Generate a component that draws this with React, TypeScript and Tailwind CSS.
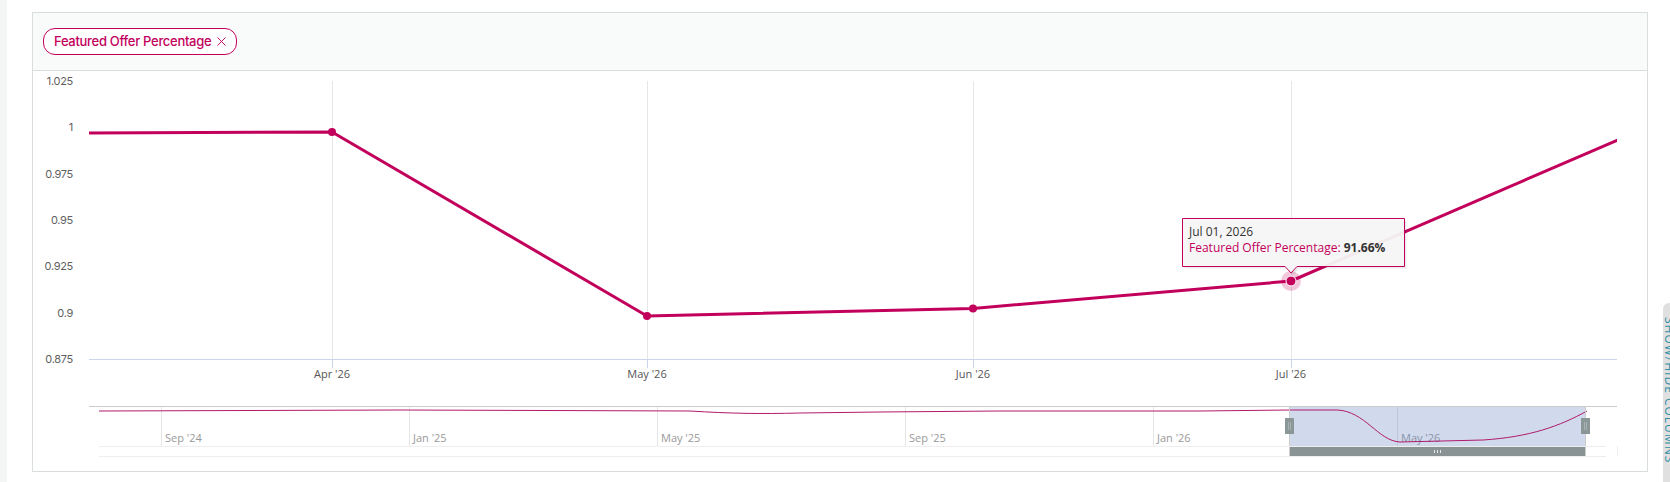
import React from "react";
import { X } from "lucide-react";

const CRIMSON = "#c2005c";

const yTicks: [string, number][] = [
  ["1.025", 81],
  ["1", 127],
  ["0.975", 174],
  ["0.95", 220],
  ["0.925", 266],
  ["0.9", 313],
  ["0.875", 359],
];

const xTicks: [string, number][] = [
  ["Apr '26", 332],
  ["May '26", 647],
  ["Jun '26", 973],
  ["Jul '26", 1291],
];

const navTicks: [string, number][] = [
  ["Sep '24", 161],
  ["Jan '25", 409],
  ["May '25", 657],
  ["Sep '25", 905],
  ["Jan '26", 1153],
  ["May '26", 1397],
];

const points: [number, number][] = [
  [332, 132],
  [647, 316],
  [973, 308.5],
];

const openSans = { fontFamily: "'Open Sans', 'DejaVu Sans', sans-serif" };

function Chart() {
  return (
    <svg width={1614} height={400} viewBox="33 71 1614 400" className="block">
      <defs>
        <clipPath id="plot">
          <rect x={89} y={70} width={1528} height={300} />
        </clipPath>
      </defs>
      {/* vertical grid */}
      {xTicks.map(([, x]) => (
        <line key={x} x1={x + 0.5} x2={x + 0.5} y1={81} y2={359} stroke="#e6e6e6" strokeWidth={1} />
      ))}
      {/* x axis line */}
      <line x1={89} x2={1617} y1={359.5} y2={359.5} stroke="#ccd6eb" strokeWidth={1} />
      {xTicks.map(([, x]) => (
        <line key={"t" + x} x1={x + 0.5} x2={x + 0.5} y1={359} y2={368} stroke="#ccd6eb" strokeWidth={1} />
      ))}
      {/* y labels */}
      <g
        fill="#5f5f5f"
        fontSize={11}
        textAnchor="end"
        style={{ fontFamily: "Inter, 'Liberation Sans', sans-serif", letterSpacing: "-0.3px" }}
      >
        {yTicks.map(([l, y]) => (
          <text key={l} x={73} y={y + 4}>
            {l}
          </text>
        ))}
      </g>
      {/* x labels */}
      <g fill="#555555" fontSize={11} textAnchor="middle" style={openSans}>
        {xTicks.map(([l, x]) => (
          <text key={l} x={x} y={378}>
            {l}
          </text>
        ))}
      </g>
      {/* series */}
      <g clipPath="url(#plot)">
        <path
          d="M89,133 L332,132 L647,316 L973,308.5 L1291,281 L1620,139"
          fill="none"
          stroke={CRIMSON}
          strokeWidth={3}
          strokeLinejoin="round"
        />
        {points.map(([x, y]) => (
          <circle key={x} cx={x} cy={y} r={4} fill={CRIMSON} />
        ))}
        <circle cx={1291} cy={281} r={10} fill={CRIMSON} opacity={0.22} />
        <circle cx={1291} cy={281} r={5} fill={CRIMSON} stroke="#ffffff" strokeWidth={1} />
      </g>

      {/* navigator */}
      {navTicks.map(([, x]) => (
        <line key={"n" + x} x1={x + 0.5} x2={x + 0.5} y1={406} y2={446} stroke="#e6e6e6" strokeWidth={1} />
      ))}
      <g fill="#999999" fontSize={11} style={openSans}>
        {navTicks.map(([l, x]) => (
          <text key={"nl" + l} x={x + 4} y={442}>
            {l}
          </text>
        ))}
      </g>
      <rect x={1289} y={406.5} width={296} height={40} fill="rgba(102,133,194,0.3)" />
      <path
        d="M99,411 L400,410 L690,411 C730,413.5 760,414 800,413 L880,412 L1000,411 L1200,411 L1290,410 L1337,410 C1365,411 1378,441 1400,442 L1483,440 C1530,437 1560,426 1587,411"
        fill="none"
        stroke="#b01a6c"
        strokeWidth={1}
      />
      {/* outline */}
      <line x1={89} x2={1617} y1={406.5} y2={406.5} stroke="#cccccc" strokeWidth={1} />
      <line x1={1289.5} x2={1289.5} y1={406} y2={456} stroke="#cccccc" strokeWidth={1} />
      <line x1={1585.5} x2={1585.5} y1={406} y2={456} stroke="#cccccc" strokeWidth={1} />
      {/* scrollbar */}
      <line x1={99} x2={1606} y1={446.5} y2={446.5} stroke="#eeeeee" strokeWidth={1} />
      <line x1={99} x2={1606} y1={456.5} y2={456.5} stroke="#eeeeee" strokeWidth={1} />
      <line x1={1617.5} x2={1617.5} y1={446} y2={456} stroke="#eeeeee" strokeWidth={1} />
      <rect x={1290} y={447} width={295} height={9} fill="#899393" />
      <line x1={1434.5} x2={1434.5} y1={450} y2={453} stroke="#e8e8e8" strokeWidth={1} />
      <line x1={1437.5} x2={1437.5} y1={450} y2={453} stroke="#e8e8e8" strokeWidth={1} />
      <line x1={1440.5} x2={1440.5} y1={450} y2={453} stroke="#e8e8e8" strokeWidth={1} />
      {/* handles */}
      {[1285, 1581].map((x) => (
        <g key={"h" + x}>
          <rect x={x} y={418} width={9} height={16} fill="#8b9696" />
          <line x1={x + 3.5} x2={x + 3.5} y1={422} y2={430} stroke="#a9b2b2" strokeWidth={1} />
          <line x1={x + 5.5} x2={x + 5.5} y1={422} y2={430} stroke="#a9b2b2" strokeWidth={1} />
        </g>
      ))}

      {/* tooltip */}
      <path d="M1184.5,220.5 H1406.5 V268.5 H1299 L1293,275 L1287,268.5 H1184.5 Z" fill="rgba(0,0,0,0.08)" />
      <path
        d="M1182.5,218.5 H1404.5 V266.5 H1297 L1291,273 L1285,266.5 H1182.5 Z"
        fill="rgba(247,247,247,0.95)"
        stroke={CRIMSON}
        strokeWidth={1}
      />
      <g fontSize={12} style={openSans}>
        <text x={1189} y={236} fill="#333333">
          Jul 01, 2026
        </text>
        <text x={1189} y={252} fill={CRIMSON}>
          Featured Offer Percentage:{" "}
          <tspan fill="#333333" fontWeight={700}>
            91.66%
          </tspan>
        </text>
      </g>
    </svg>
  );
}

export default function App() {
  return (
    <div className="relative flex w-[1670px] h-[482px] overflow-hidden bg-white">
      <div className="w-[7px] h-full bg-[#f4f5f5]" />
      <div className="ml-[25px] mt-[12px] w-[1616px] h-[460px] border border-[#d9dddd] flex flex-col">
        <div className="h-[58px] shrink-0 bg-[#f9fafa] border-b border-[#d9dddd] pl-[10px] pt-[15px]">
          <div className="inline-flex h-[27px] items-center gap-[3px] rounded-[12px] border border-[#c2005c] bg-white pl-[10px] pr-[7px] font-[Inter,'Liberation_Sans',sans-serif] text-[13px] font-medium text-[#c2005c]">
            <span className="tracking-[-0.3px]">Featured Offer Percentage</span>
            <X size={15} strokeWidth={1.5} />
          </div>
        </div>
        <div className="flex-1">
          <Chart />
        </div>
      </div>
      <div className="absolute left-[1663px] top-[303px] w-[28px] h-[200px] rounded-tl-[6px] bg-[#e0e0e0] pt-[14px]">
        <div className="font-['Open_Sans','DejaVu_Sans',sans-serif] text-[12px] leading-none tracking-[1px] text-[#2f8fa3] [writing-mode:vertical-rl]">
          SHOW/HIDE COLUMNS
        </div>
      </div>
    </div>
  );
}
